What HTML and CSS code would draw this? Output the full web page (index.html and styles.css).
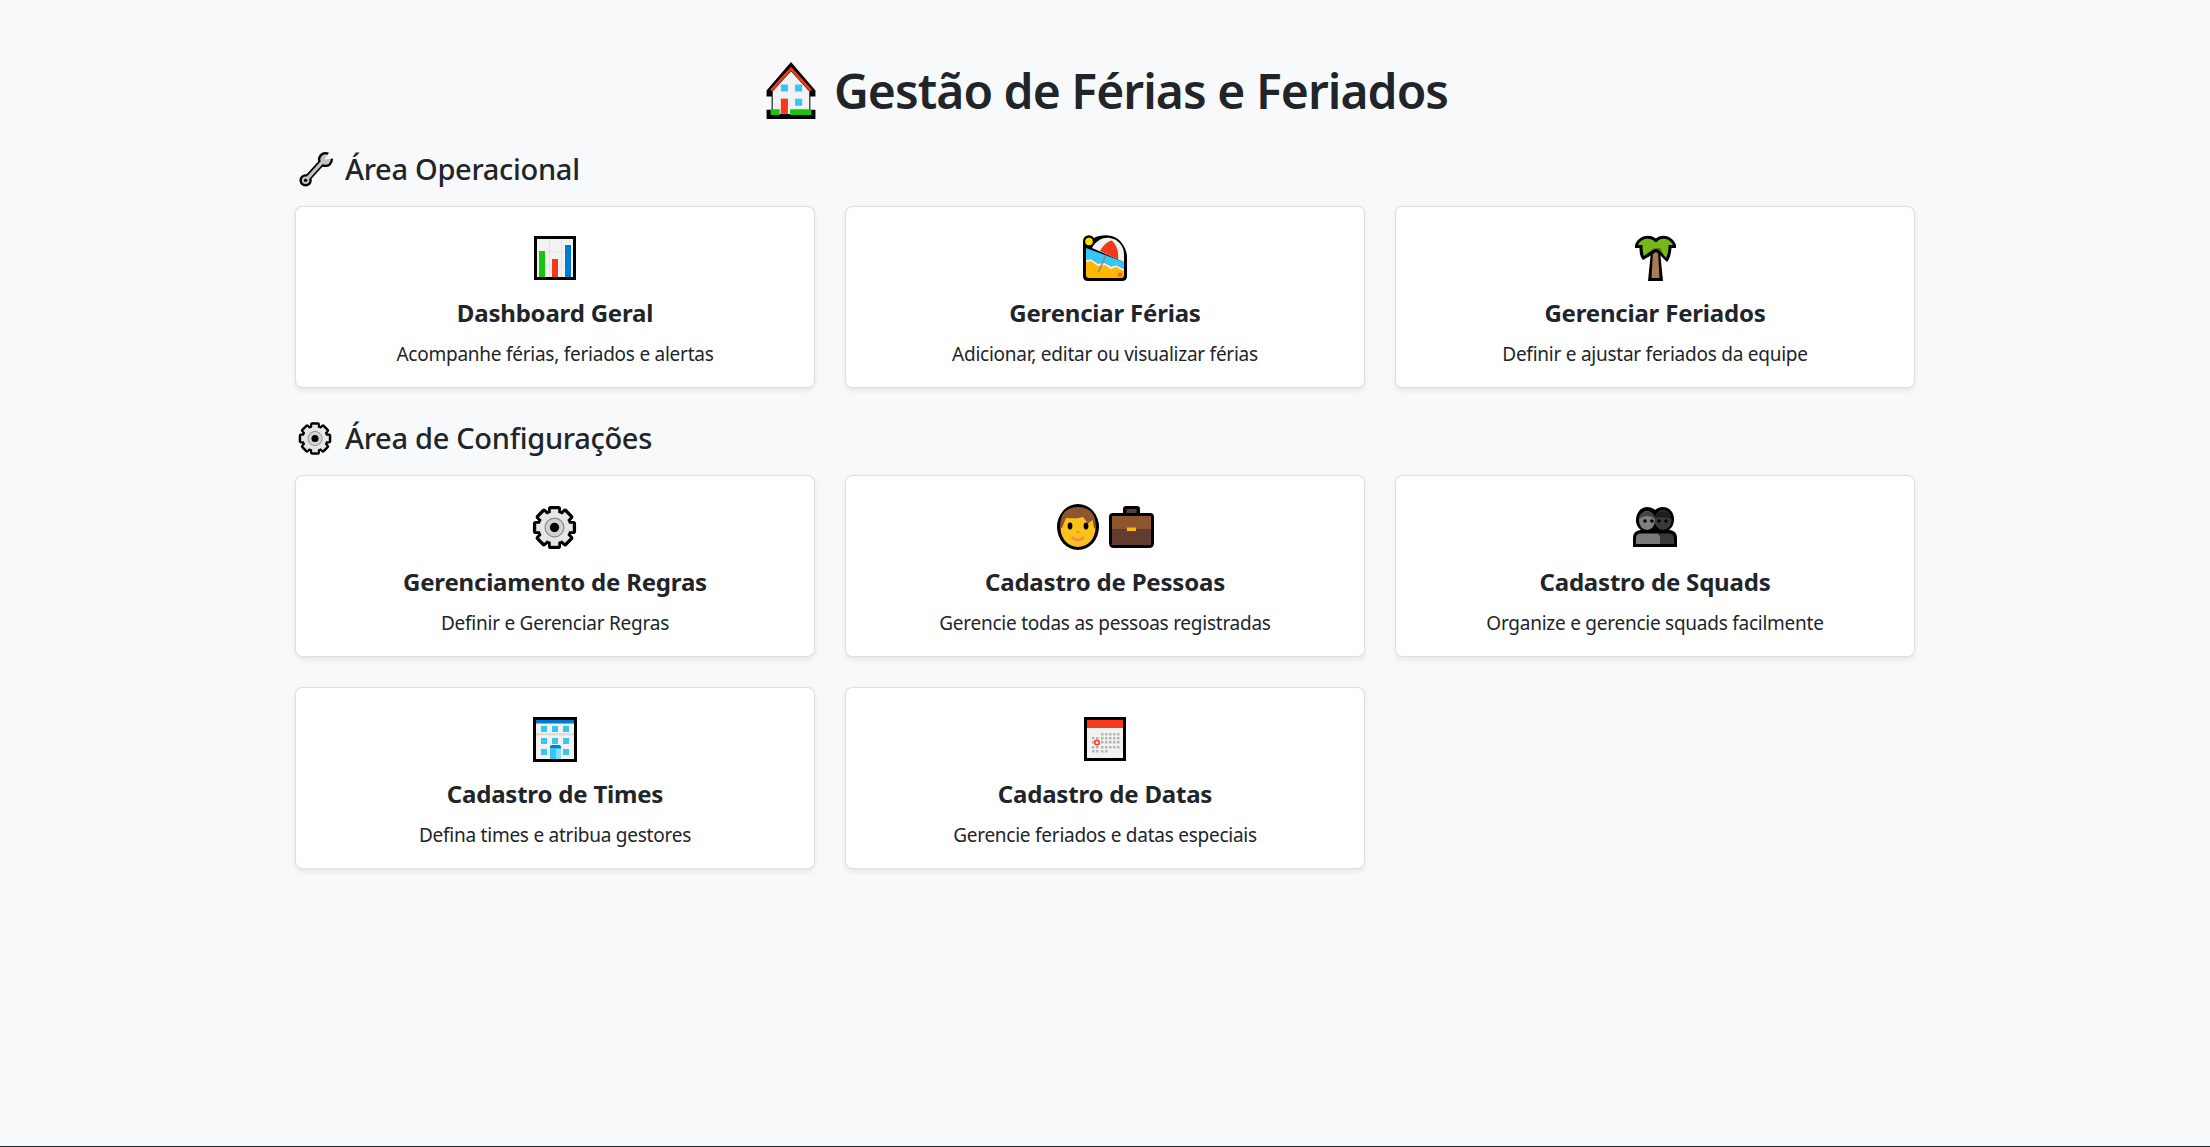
FILE: index.html
```html
<!DOCTYPE html>
<html lang="pt-BR">
<head>
<meta charset="utf-8">
<title>Gestão de Férias e Feriados</title>
<link rel="stylesheet" href="styles.css">
</head>
<body>
<svg class="defs" width="0" height="0" aria-hidden="true">
  <symbol id="gear" viewBox="0 0 48 48">
    <g fill="#000">
      <rect x="17" y="1" width="14" height="46" rx="3"/>
      <rect x="17" y="1" width="14" height="46" rx="3" transform="rotate(45 24 24)"/>
      <rect x="17" y="1" width="14" height="46" rx="3" transform="rotate(90 24 24)"/>
      <rect x="17" y="1" width="14" height="46" rx="3" transform="rotate(135 24 24)"/>
      <circle cx="24" cy="24" r="19"/>
    </g>
    <g fill="#e6e6e6">
      <rect x="20" y="4.500" width="8" height="39"/>
      <rect x="20" y="4.500" width="8" height="39" transform="rotate(45 24 24)"/>
      <rect x="20" y="4.500" width="8" height="39" transform="rotate(90 24 24)"/>
      <rect x="20" y="4.500" width="8" height="39" transform="rotate(135 24 24)"/>
      <circle cx="24" cy="24" r="16"/>
    </g>
    <circle cx="24" cy="24" r="10" fill="#d2d2d2" stroke="#8a8a8a" stroke-width="1.300"/>
    <circle cx="24" cy="24" r="5" fill="#000"/>
  </symbol>
</svg>
<div class="page">
  <main class="container">
    <h1 class="page-title">
      <svg class="ico-house" viewBox="0 0 48 56">
        <path d="M24 0 48 28V34H43V47H48V56H0V47H5V34H0V28Z" fill="#000"/>
        <path d="M24 9 42 29V51H6V29Z" fill="#f2f2f2"/>
        <path d="M4.500 28 24 6.500 43.500 28" fill="none" stroke="#f7391b" stroke-width="2.600"/>
        <path d="M4 46.500H13V52H4ZM23 46.500H44V52H23Z" fill="#16c60c"/>
        <path d="M14 36H21V51H14Z" fill="#f7391b"/>
        <path d="M14 22H21V29H14ZM28 22H35V29H28ZM28 36H35V43H28Z" fill="#35c6f4"/>
      </svg>
      <span>Gestão de Férias e Feriados</span>
    </h1>

    <h2 class="section-title">
      <span class="section-icon">
        <svg class="ico-wrench" viewBox="0 0 36 38">
          <path d="M7 31 27 9" stroke="#000" stroke-width="7" stroke-linecap="round"/>
          <circle cx="7" cy="31" r="6.500" fill="#000"/>
          <circle cx="28" cy="9" r="8" fill="#000"/>
          <path d="M7 31 27 9" stroke="#c4c4c4" stroke-width="3.500"/>
          <circle cx="7" cy="31" r="4" fill="#c4c4c4"/>
          <circle cx="28" cy="9" r="5.500" fill="#c4c4c4"/>
          <circle cx="7" cy="31" r="1.800" fill="#000"/>
          <path d="M27 9 33 0H36V8Z" fill="#f8f9fa"/>
        </svg>
      </span>
      <span>Área Operacional</span>
    </h2>
    <div class="card-grid">
      <a class="card">
        <div class="icons">
          <svg class="ico-chart" viewBox="0 0 42 44">
            <rect x="1.500" y="1.500" width="39" height="41" fill="#f2f2f2" stroke="#000" stroke-width="3"/>
            <path d="M15.500 3V41M27.500 3V41M3 16H39M3 29H39" stroke="#e2e2e2" stroke-width="1"/>
            <rect x="5" y="15" width="6" height="26" fill="#16c60c"/>
            <rect x="18" y="23" width="6" height="18" fill="#f7391b"/>
            <rect x="31" y="9" width="6" height="32" fill="#0078d4"/>
          </svg>
        </div>
        <h3 class="card-title">Dashboard Geral</h3>
        <p class="card-text">Acompanhe férias, feriados e alertas</p>
      </a>
      <a class="card">
        <div class="icons">
          <svg class="ico-beach" viewBox="0 0 44 46">
            <path d="M0 6A6 6 0 0 1 11 3C19-1 31-1 38 7 42 12 44 17 44 22V41Q44 46 39 46H5Q0 46 0 41Z" fill="#000"/>
            <path d="M3 24 41 34V40Q41 43 38 43H6Q3 43 3 40Z" fill="#ffb900"/>
            <path d="M3 13 41 27V34L33 30 28 32 22 28 15 29 8 24 3 25Z" fill="#35c6f4"/>
            <path d="M3 25 8 24 15 29 22 28 28 32 33 30 41 34V36L33 32 28 34 22 30 15 31 8 26 3 27Z" fill="#f2f2f2"/>
            <path d="M9 13C13 5 21 2 27 3 35 4 41 11 41 19V27Z" fill="#f2f2f2"/>
            <path d="M17 16C20 10 25 6 29 5.500 33 10 36 15 35 24.500Z" fill="#f7391b"/>
            <path d="M23 20 15.500 37" stroke="#888" stroke-width="1.600"/>
            <circle cx="6" cy="6.500" r="3.800" fill="#fce100"/>
            <path d="M37 36.500l1 2 2 .3-1.500 1.400.4 2-1.900-1-1.900 1 .4-2L34 38.800l2-.3Z" fill="#f7630c"/>
          </svg>
        </div>
        <h3 class="card-title">Gerenciar Férias</h3>
        <p class="card-text">Adicionar, editar ou visualizar férias</p>
      </a>
      <a class="card">
        <div class="icons">
          <svg class="ico-palm" viewBox="0 0 41 46">
            <path d="M16 16H25L28 46H13Z" fill="#000"/>
            <path d="M18 16H23L24.500 43H16.500Z" fill="#a67c52"/>
            <path d="M21 3.500C25-1 37-1 41 10V13H36.500C36 20 34 25 32 27L26 21 21 17 15 21 8 25C5 22 4.500 17 4.500 13H0V10C4-1 16-1 21 3.500Z" fill="#000"/>
            <path d="M21 7.500C25 2 34 2 38 10H33.500C33.500 15 33 19 31 23L26 16.500 21 13.500 15 16.500 9 21C8 19 7.500 15 7.500 10H3C7 2 16 2 21 7.500Z" fill="#76b81a"/>
            <path d="M16 16C17 13 19 13 21 14 23 12 26 13 27 16L21 13.500Z" fill="#6b4a2b"/>
          </svg>
        </div>
        <h3 class="card-title">Gerenciar Feriados</h3>
        <p class="card-text">Definir e ajustar feriados da equipe</p>
      </a>
    </div>

    <h2 class="section-title">
      <span class="section-icon">
        <svg class="ico-gear-sm"><use href="#gear"/></svg>
      </span>
      <span>Área de Configurações</span>
    </h2>
    <div class="card-grid">
      <a class="card">
        <div class="icons">
          <svg class="ico-gear"><use href="#gear"/></svg>
        </div>
        <h3 class="card-title">Gerenciamento de Regras</h3>
        <p class="card-text">Definir e Gerenciar Regras</p>
      </a>
      <a class="card">
        <div class="icons icons-pair">
          <svg class="ico-face" viewBox="0 0 42 46">
            <ellipse cx="21" cy="23" rx="21" ry="23" fill="#000"/>
            <ellipse cx="21" cy="24" rx="17.500" ry="19" fill="#fcc21b"/>
            <path d="M3.500 24C2 10 10 3 21 3 32 3 40 10 38.500 24H37L35.500 16 31 19.500 26 13C20 15 14 14 9 14L5 24Z" fill="#8e562e"/>
            <ellipse cx="13" cy="22" rx="2.400" ry="3.400" fill="#000"/>
            <ellipse cx="29" cy="22" rx="2.400" ry="3.400" fill="#000"/>
            <path d="M19 27H23L21 30Z" fill="#f7894a"/>
            <path d="M16 34Q21 38 26 34" fill="none" stroke="#f7894a" stroke-width="2.600" stroke-linecap="round"/>
          </svg>
          <svg class="ico-case" viewBox="0 0 45 42">
            <path d="M14 7V3Q14 0 17 0H28Q31 0 31 3V7H41Q45 7 45 11V37Q45 42 40 42H5Q0 42 0 37V11Q0 7 4 7Z" fill="#000"/>
            <path d="M17.500 3H27.500V7H17.500Z" fill="#5f3f2c"/>
            <rect x="3" y="10" width="39" height="13" fill="#8e562e"/>
            <rect x="3" y="23" width="39" height="16" fill="#613d30"/>
            <rect x="18" y="21.500" width="9" height="3.500" fill="#ffb900"/>
          </svg>
        </div>
        <h3 class="card-title">Cadastro de Pessoas</h3>
        <p class="card-text">Gerencie todas as pessoas registradas</p>
      </a>
      <a class="card">
        <div class="icons">
          <svg class="ico-squad" viewBox="0 0 44 40">
            <path d="M0 40V31Q0 24 7 23H8C4 20 2.500 16 3 12 4 4 9 0 14 0 17 0 20 1 22 3 24 1 27 0 30 0 36 0 41 5 41 12 41 16 40 20 36 23H37Q44 24 44 31V40Z" fill="#000"/>
            <path d="M3 37V31Q3 26.500 8 26.500H24Q27 26.500 27 31V37Z" fill="#7a7a7a"/>
            <path d="M27 37V31Q27 26.500 24 26.500H36Q41 26.500 41 31V37Z" fill="#3a3a3a"/>
            <ellipse cx="30" cy="13" rx="8.500" ry="10" fill="#3a3a3a"/>
            <path d="M22 11C23 3 36 1 38.500 12 33 10 27 10 22 11Z" fill="#1c1c1c"/>
            <ellipse cx="14" cy="13.500" rx="8" ry="9.500" fill="#808080"/>
            <path d="M6 12C7 2 21 2 22 12 17 8 11 8 6 12Z" fill="#444"/>
            <circle cx="12" cy="14" r="1.800"/>
            <circle cx="19" cy="14" r="1.800"/>
            <circle cx="26" cy="14" r="1.800"/>
            <circle cx="33" cy="14" r="1.800"/>
          </svg>
        </div>
        <h3 class="card-title">Cadastro de Squads</h3>
        <p class="card-text">Organize e gerencie squads facilmente</p>
      </a>
      <a class="card">
        <div class="icons">
          <svg class="ico-build" viewBox="0 0 44 45">
            <rect x="1.500" y="1.500" width="41" height="42" fill="#f2f2f2" stroke="#000" stroke-width="3"/>
            <rect x="3" y="3" width="38" height="3.500" fill="#0078d4"/>
            <rect x="3" y="16" width="38" height="2.500" fill="#dcdcdc"/>
            <path d="M8 9H14V15H8ZM19 9H25V15H19ZM30 9H36V15H30ZM8 21H14V27H8ZM19 21H25V27H19ZM30 21H36V27H30ZM8 32H14V38H8ZM30 32H36V38H30Z" fill="#35c6f4"/>
            <path d="M17 42V30Q17 28 19 28H26Q28 28 28 30V42Z" fill="#35c6f4"/>
            <path d="M23 32H28V42H23Z" fill="#7fe0ff"/>
            <path d="M17 31Q17 28 20 28H25Q28 28 28 31Z" fill="#0078d4"/>
          </svg>
        </div>
        <h3 class="card-title">Cadastro de Times</h3>
        <p class="card-text">Defina times e atribua gestores</p>
      </a>
      <a class="card">
        <div class="icons">
          <svg class="ico-cal" viewBox="0 0 42 44">
            <rect x="1.500" y="1.500" width="39" height="41" fill="#f2f2f2" stroke="#000" stroke-width="3"/>
            <rect x="3" y="3" width="36" height="8" fill="#f7391b"/>
            <path d="M17 16h2.500v2.500H17ZM21 16h2.500v2.500H21ZM25 16h2.500v2.500H25ZM29 16h2.500v2.500H29ZM33 16h2.500v2.500H33ZM8 20h2.500v2.500H8ZM12 20h2.500v2.500H12ZM17 20h2.500v2.500H17ZM21 20h2.500v2.500H21ZM25 20h2.500v2.500H25ZM29 20h2.500v2.500H29ZM33 20h2.500v2.500H33ZM8 24h2.500v2.500H8ZM17 24h2.500v2.500H17ZM21 24h2.500v2.500H21ZM25 24h2.500v2.500H25ZM29 24h2.500v2.500H29ZM33 24h2.500v2.500H33ZM8 29h2.500v2.500H8ZM12 29h2.500v2.500H12ZM17 29h2.500v2.500H17ZM21 29h2.500v2.500H21ZM25 29h2.500v2.500H25ZM29 29h2.500v2.500H29ZM33 29h2.500v2.500H33ZM8 33h2.500v2.500H8ZM12 33h2.500v2.500H12ZM17 33h2.500v2.500H17ZM21 33h2.500v2.500H21Z" fill="#b5b5b5"/>
            <circle cx="13" cy="25.500" r="2.300" fill="none" stroke="#f7391b" stroke-width="1.500"/>
            <path d="M39 37V40H35Z" fill="#fff"/>
          </svg>
        </div>
        <h3 class="card-title">Cadastro de Datas</h3>
        <p class="card-text">Gerencie feriados e datas especiais</p>
      </a>
    </div>
  </main>
  <div class="bottom-edge"></div>
</div>
</body>
</html>
```

FILE: styles.css
```css
* { box-sizing: border-box; }
html, body { margin: 0; height: 100%; }
body {
  background: #f8f9fa;
  color: #212529;
  font-family: "Noto Sans", "Open Sans", "Liberation Sans", sans-serif;
  overflow: hidden;
}
.defs { position: absolute; }
.page { display: flex; flex-direction: column; height: 100vh; }
.container { flex: 1; width: 1620px; margin: 0 auto; padding-top: 57px; }
.page-title {
  margin: 0 0 22px;
  padding-left: 4px;
  display: flex;
  justify-content: center;
  align-items: center;
  gap: 18px;
  font-size: 48px;
  font-weight: 600;
  letter-spacing: -.95px;
  line-height: 68px;
  height: 68px;
}
.ico-house { width: 50px; height: 57px; margin-top: -1px; }
.section-title {
  margin: 0 0 15px;
  display: flex;
  align-items: center;
  gap: 11px;
  height: 44px;
  padding-left: 3px;
  font-size: 29px;
  font-weight: 500;
  letter-spacing: -.3px;
  line-height: 44px;
}
.section-icon { display: flex; align-items: center; justify-content: center; width: 36px; height: 38px; }
.card-grid { display: grid; grid-template-columns: repeat(3, 520px); gap: 30px; margin-bottom: 28px; }
.card {
  display: flex;
  flex-direction: column;
  align-items: center;
  height: 182px;
  padding-top: 27px;
  background: #fff;
  border: 1.25px solid rgba(0, 0, 0, .125);
  border-radius: 7.5px;
  box-shadow: 0 2.5px 5px rgba(0, 0, 0, .075);
}
.icons { display: flex; align-items: center; justify-content: center; height: 48px; }
.icons-pair { gap: 10px; }
.card-title { margin: 14px 0 0; font-size: 24px; font-weight: 700; letter-spacing: -.2px; line-height: 34px; }
.card-text { margin: 9px 0 0; font-size: 19px; letter-spacing: -.25px; line-height: 30px; }
.bottom-edge { height: 1px; background: #212529; flex: none; }
.ico-wrench { width: 34px; height: 36px; }
.ico-gear-sm { width: 35px; height: 35px; margin-right: 2px; }
.ico-chart { width: 42px; height: 44px; }
.ico-beach { width: 44px; height: 46px; }
.ico-palm { width: 41px; height: 46px; }
.ico-gear { width: 45px; height: 45px; margin-right: 1px; }
.ico-face { width: 42px; height: 46px; }
.ico-case { width: 45px; height: 42px; }
.ico-squad { width: 44px; height: 40px; }
.ico-build { width: 44px; height: 45px; }
.ico-cal { width: 42px; height: 44px; }
```
